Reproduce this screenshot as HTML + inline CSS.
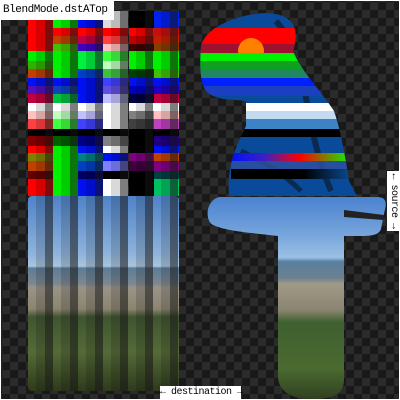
<!DOCTYPE html>
<html><head><style>
html,body{margin:0;padding:0;background:#fff;}
#c{position:absolute;left:0;top:0;width:398px;height:398px;border:1px solid #fff;
background:conic-gradient(#191919 25%,#2b2b2b 0 50%,#191919 0 75%,#2b2b2b 0);background-size:16px 16px;background-position:1px 1px;overflow:hidden;}
.col{position:absolute;width:25px;}
.lbl{position:absolute;background:#fff;color:#000;font-family:"Liberation Mono",monospace;white-space:nowrap;}
</style></head><body>
<div id="c">
<svg width="398" height="398" style="position:absolute;left:0;top:0">
<defs>
<linearGradient id="ph" x1="0" y1="0" x2="0" y2="1">
<stop offset="0" stop-color="#4f82c8"/><stop offset="0.3" stop-color="#8fb4dc"/><stop offset="0.36" stop-color="#aac4dc"/>
<stop offset="0.37" stop-color="#5d7c98"/><stop offset="0.45" stop-color="#7d8890"/><stop offset="0.47" stop-color="#9a9488"/>
<stop offset="0.58" stop-color="#8a8470"/><stop offset="0.62" stop-color="#3f5530"/><stop offset="0.8" stop-color="#556a38"/><stop offset="1" stop-color="#2e3a1c"/>
</linearGradient>
<linearGradient id="ph2" x1="0" y1="0" x2="0" y2="1">
<stop offset="0" stop-color="#4a82d0"/><stop offset="0.2" stop-color="#7aa8dc"/><stop offset="0.3" stop-color="#9cc0e4"/>
<stop offset="0.32" stop-color="#5880a0"/><stop offset="0.4" stop-color="#6c8090"/><stop offset="0.43" stop-color="#a09a88"/>
<stop offset="0.56" stop-color="#8a8470"/><stop offset="0.62" stop-color="#3f6030"/><stop offset="0.85" stop-color="#4a6a30"/><stop offset="1" stop-color="#304020"/>
</linearGradient>
<linearGradient id="rb" x1="0" y1="0" x2="1" y2="0">
<stop offset="0" stop-color="#0010ff"/><stop offset="0.3" stop-color="#4020c0"/><stop offset="0.6" stop-color="#ff0000"/><stop offset="1" stop-color="#20e000"/>
</linearGradient>
<linearGradient id="bk" x1="0" y1="0" x2="1" y2="0">
<stop offset="0" stop-color="#000"/><stop offset="0.6" stop-color="#000"/><stop offset="1" stop-color="#0a4a90"/>
</linearGradient>
<clipPath id="par"><path d="M200,45 C205,25 240,12 268,12 C290,14 300,25 292,50 C300,70 320,90 333,110 C340,130 345,160 348,180 L356,195 L228,195 C226,170 232,150 245,125 L245,100 C230,98 215,100 205,90 C198,80 199,60 200,45 Z"/></clipPath>
</defs>
<rect x="27" y="195" width="151" height="195" rx="4" fill="url(#ph)"/>
<g clip-path="url(#par)">
<rect x="190" y="0" width="170" height="200" fill="#0a4a9a"/>
<path d="M275,20 C310,60 300,120 330,190" stroke="#0a2a50" stroke-width="6" fill="none"/>
<path d="M240,150 C260,160 280,170 300,190" stroke="#0a2a50" stroke-width="5" fill="none"/>
<rect x="190" y="27" width="170" height="16" fill="#f00"/>
<rect x="190" y="43" width="170" height="9" fill="#a01030"/>
<circle cx="250" cy="50" r="13" fill="#ff8000"/>
<rect x="190" y="52" width="170" height="8" fill="#00f000"/>
<rect x="190" y="60" width="170" height="8" fill="#10a020"/>
<rect x="190" y="68" width="170" height="9" fill="#208860"/>
<rect x="190" y="77" width="170" height="8" fill="#0020ff"/>
<rect x="190" y="85" width="170" height="10" fill="#1a40c0"/>
<rect x="190" y="102" width="170" height="8" fill="#fff"/>
<rect x="190" y="110" width="170" height="8" fill="#c4daf0"/>
<rect x="190" y="118" width="170" height="10" fill="#3c82c4"/>
<rect x="190" y="128" width="170" height="8" fill="#000"/>
<rect x="230" y="152" width="115" height="8" fill="url(#rb)"/>
<rect x="230" y="160" width="120" height="8" fill="#3050a0" opacity="0.8"/>
<rect x="230" y="168" width="120" height="10" fill="url(#bk)"/>
</g>
<path d="M218,196 L376,196 C384,196 386,200 384,208 L380,228 C378,234 370,235 360,235 L343,235 L343,378 C343,395 330,398 310,398 C290,398 277,390 277,375 L277,235 C250,232 225,230 212,224 C204,220 204,200 218,196 Z" fill="url(#ph2)"/>
<path d="M343,209 L383,214 L382,219 L343,216 Z" fill="#222"/>
</svg>
<div class="col" style="left:27px;top:17px;height:178px;background:linear-gradient(#f00 0 33px,#00f000 33px 43px,#30b000 43px 51px,#c04000 51px 60px,#0010f0 60px 68px,#5010c0 68px 76px,#c00040 76px 85px,#fff 85px 93px,#ffc0c0 93px 101px,#ff4040 101px 111px,#000 111px 118px,#800000 118px 128px,#f00 128px 135px,#808000 135px 143px,#c04000 143px 153px,#600000 153px 161px,#f00 161px)"></div>
<div class="col" style="left:52px;top:17px;height:178px;background:linear-gradient(#00f000 0 10px,#f00 10px 18px,#c04000 18px 26px,#40c000 26px 33px,#00f000 33px 60px,#0010f0 60px 68px,#1040c0 68px 76px,#00c040 76px 85px,#fff 85px 93px,#c0ffc0 93px 101px,#40ff40 101px 111px,#000 111px 118px,#006000 118px 128px,#00f000 128px)"></div>
<div class="col" style="left:77px;top:17px;height:178px;background:linear-gradient(#0010f0 0 10px,#f00 10px 18px,#c00040 18px 26px,#4000c0 26px 33px,#00f040 33px 51px,#0040c0 51px 60px,#0010f0 60px 85px,#fff 85px 93px,#c0c0ff 93px 101px,#4040ff 101px 111px,#000 111px 118px,#000080 118px 128px,#0010f0 128px 135px,#008080 135px 143px,#0040c0 143px 153px,#000060 153px 161px,#0010f0 161px)"></div>
<div class="col" style="left:102px;top:10px;height:185px;background:linear-gradient(#ddd 0 17px,#f00 17px 25px,#ff4040 25px 33px,#ffc0c0 33px 40px,#40ff40 40px 50px,#c0ffc0 50px 58px,#40c040 58px 67px,#4040ff 67px 75px,#6050e0 75px 83px,#c0c0ff 83px 92px,#fff 92px 118px,#000 118px 125px,#808080 125px 135px,#fff 135px 142px,#0010f0 142px 150px,#8080ff 150px 160px,#000 160px 168px,#fff 168px)"></div>
<div class="col" style="left:128px;top:10px;height:185px;background:linear-gradient(#000 0 17px,#f00 17px 25px,#c00000 25px 33px,#400000 33px 40px,#00f000 40px 58px,#004000 58px 67px,#0010f0 67px 75px,#0000c0 75px 83px,#000040 83px 92px,#fff 92px 100px,#808080 100px 108px,#404040 108px 118px,#000 118px 142px,#800080 142px 150px,#400040 150px 160px,#000 160px)"></div>
<div class="col" style="left:153px;top:10px;height:185px;background:linear-gradient(#0020f0 0 17px,#c01010 17px 25px,#c02000 25px 33px,#804000 33px 40px,#00f000 40px 58px,#40c000 58px 67px,#0010f0 67px 75px,#2000c0 75px 83px,#c00040 83px 92px,#fff 92px 100px,#ffc0c0 100px 108px,#c040c0 108px 118px,#000 118px 125px,#200080 125px 135px,#0010f0 135px 142px,#c04000 142px 150px,#800080 150px 160px,#004040 160px 168px,#00c060 168px)"></div>
<div style="position:absolute;left:27px;top:10px;width:151px;height:380px;background:repeating-linear-gradient(90deg,rgba(0,0,0,0) 0 8px,rgba(0,0,0,0.15) 8px 17px,rgba(20,20,20,0.55) 17px 25px)"></div>
<div class="lbl" style="left:0;top:0;width:111px;height:19px;font-size:11px;letter-spacing:-0.45px;line-height:19px;padding-left:2px">BlendMode.dstATop</div>
<div class="lbl" style="left:159px;top:385px;width:81px;height:13px;font-size:10px;letter-spacing:-0.5px;line-height:13px;text-align:center">← destination →</div>
<div class="lbl" style="left:386px;top:170px;width:12px;height:60px;"><div style="position:absolute;left:-24px;top:24px;width:60px;height:12px;transform:rotate(90deg);font-size:10px;letter-spacing:-0.5px;line-height:12px;text-align:center">← source →</div></div>
</div>
</body></html>
